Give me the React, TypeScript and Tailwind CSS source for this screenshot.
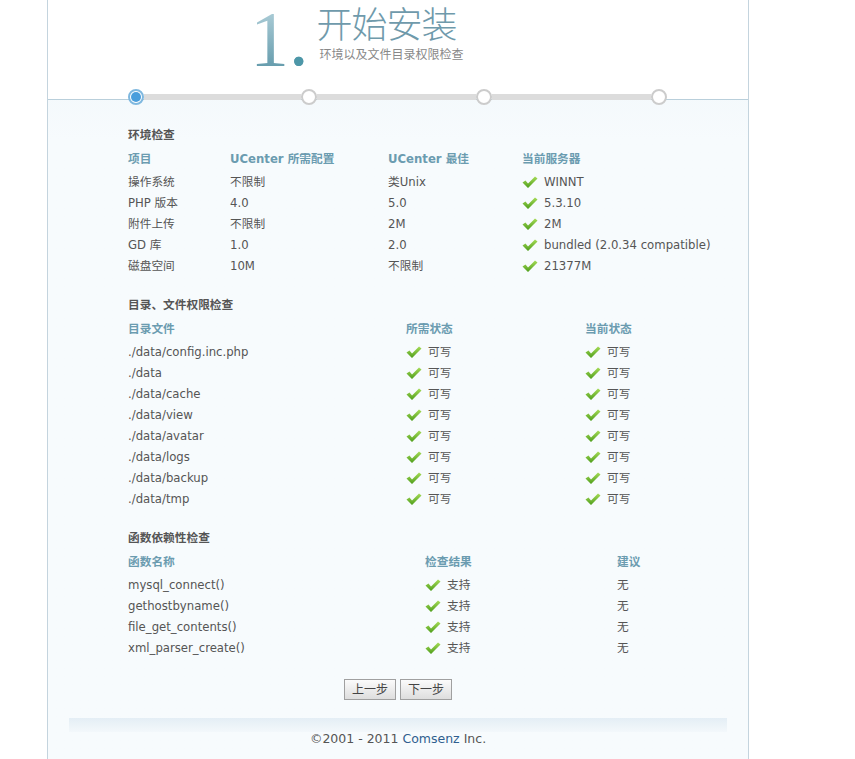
import React from 'react';

const font = { fontFamily: '"DejaVu Sans", "Noto Sans CJK SC", sans-serif' };

function Check() {
  return (
    <svg width="16" height="13" viewBox="0 0 16 13" className="shrink-0">
      <defs>
        <linearGradient id="ck" x1="0" y1="0" x2="0" y2="1">
          <stop offset="0" stopColor="#a6dc57" />
          <stop offset="1" stopColor="#4f9e1c" />
        </linearGradient>
      </defs>
      <polygon points="0.5,6.5 3.5,4.5 6,7.5 13,0.5 15.5,2.5 6,12" fill="url(#ck)" />
    </svg>
  );
}

function Ok({ text }: { text: string }) {
  return (
    <span className="flex items-center gap-[6px]">
      <Check />
      <span>{text}</span>
    </span>
  );
}

const envRows = [
  ['操作系统', '不限制', '类Unix', 'WINNT'],
  ['PHP 版本', '4.0', '5.0', '5.3.10'],
  ['附件上传', '不限制', '2M', '2M'],
  ['GD 库', '1.0', '2.0', 'bundled (2.0.34 compatible)'],
  ['磁盘空间', '10M', '不限制', '21377M'],
];

const dirs = [
  './data/config.inc.php',
  './data',
  './data/cache',
  './data/view',
  './data/avatar',
  './data/logs',
  './data/backup',
  './data/tmp',
];

const funcs = ['mysql_connect()', 'gethostbyname()', 'file_get_contents()', 'xml_parser_create()'];

function SectionTitle({ children }: { children: React.ReactNode }) {
  return <div className="h-[24px] leading-[24px] font-bold text-[#555]">{children}</div>;
}

export default function App() {
  return (
    <div className="min-h-screen bg-white text-[11.7px] text-[#555]" style={font}>
      <div className="ml-[47px] w-[702px] min-h-screen border-x border-[#c4d4de] flex flex-col bg-gradient-to-b from-[#eef5fa] to-[#f7fbfd] to-[140px]">
        {/* header */}
        <div className="h-[100px] bg-white border-b border-[#b9cfdb] flex pl-[200px]">
          <div
            className="text-[78px] leading-[78px] px-[2px] bg-gradient-to-b from-[#b9d6df] to-[#3c8296] bg-clip-text text-transparent"
            style={{ fontFamily: '"Liberation Serif", serif' }}
          >
            1<span className="text-[#4d97a8]">.</span>
          </div>
          <div className="ml-[6px] flex flex-col">
            <div
              className="text-[36px] leading-[40px] mt-[2px] text-[#6f9aab] tracking-[-1px]"
              style={{ fontFamily: '"Noto Sans CJK SC", sans-serif', fontWeight: 300 }}
            >
              开始安装
            </div>
            <div className="text-[12px] leading-[16px] text-[#888] mt-[4px] ml-[3px]" style={{ fontFamily: '"Noto Sans CJK SC", sans-serif' }}>
              环境以及文件目录权限检查
            </div>
          </div>
        </div>

        {/* stepper */}
        <div className="-mt-[11px] h-[16px] flex items-center pl-[80px]">
          <div className="w-[16px] h-[16px] rounded-full border-2 border-[#7fb8df] bg-white flex items-center justify-center">
            <div className="w-[10px] h-[10px] rounded-full bg-[#4a9edc]" />
          </div>
          <div className="w-[157px] h-[6px] bg-[#dcdcdc]" />
          <div className="w-[16px] h-[16px] rounded-full border-2 border-[#cccccc] bg-white" />
          <div className="w-[159px] h-[6px] bg-[#dcdcdc]" />
          <div className="w-[16px] h-[16px] rounded-full border-2 border-[#cccccc] bg-white" />
          <div className="w-[159px] h-[6px] bg-[#dcdcdc]" />
          <div className="w-[16px] h-[16px] rounded-full border-2 border-[#cccccc] bg-white" />
        </div>

        <div className="pl-[80px] pt-[18px]">
          {/* env */}
          <SectionTitle>环境检查</SectionTitle>
          <div className="grid grid-cols-[102px_158px_134px_1fr] font-bold text-[#6b9cb0] h-[25px] leading-[24px]">
            <div>项目</div>
            <div>UCenter 所需配置</div>
            <div>UCenter 最佳</div>
            <div>当前服务器</div>
          </div>
          {envRows.map((r) => (
            <div key={r[0]} className="grid grid-cols-[102px_158px_134px_1fr] h-[21px] items-center">
              <div>{r[0]}</div>
              <div>{r[1]}</div>
              <div>{r[2]}</div>
              <Ok text={r[3]} />
            </div>
          ))}

          {/* dirs */}
          <div className="mt-[16px]">
            <SectionTitle>目录、文件权限检查</SectionTitle>
          </div>
          <div className="grid grid-cols-[278px_179px_1fr] font-bold text-[#6b9cb0] h-[25px] leading-[24px]">
            <div>目录文件</div>
            <div>所需状态</div>
            <div>当前状态</div>
          </div>
          {dirs.map((d) => (
            <div key={d} className="grid grid-cols-[278px_179px_1fr] h-[21px] items-center">
              <div>{d}</div>
              <Ok text="可写" />
              <Ok text="可写" />
            </div>
          ))}

          {/* funcs */}
          <div className="mt-[16px]">
            <SectionTitle>函数依赖性检查</SectionTitle>
          </div>
          <div className="grid grid-cols-[297px_192px_1fr] font-bold text-[#6b9cb0] h-[25px] leading-[25px]">
            <div>函数名称</div>
            <div>检查结果</div>
            <div>建议</div>
          </div>
          {funcs.map((f) => (
            <div key={f} className="grid grid-cols-[297px_192px_1fr] h-[21px] items-center">
              <div>{f}</div>
              <Ok text="支持" />
              <div>无</div>
            </div>
          ))}
        </div>

        {/* buttons */}
        <div className="mt-[20px] flex justify-center gap-[4px]">
          <button className="w-[52px] h-[21px] border border-[#a0a0a0] bg-gradient-to-b from-[#fbfbfb] to-[#dedede] text-[12px] text-[#444]">
            上一步
          </button>
          <button className="w-[52px] h-[21px] border border-[#a0a0a0] bg-gradient-to-b from-[#fbfbfb] to-[#dedede] text-[12px] text-[#444]">
            下一步
          </button>
        </div>

        {/* footer */}
        <div className="mt-[18px] mx-[21px] h-[14px] bg-gradient-to-b from-[#e4eef5] to-[#f3f8fb]" />
        <div className="text-center text-[12.5px] leading-[14px] text-[#555]">
          ©2001 - 2011 <span className="text-[#2f5f8f]">Comsenz</span> Inc.
        </div>
      </div>
    </div>
  );
}
